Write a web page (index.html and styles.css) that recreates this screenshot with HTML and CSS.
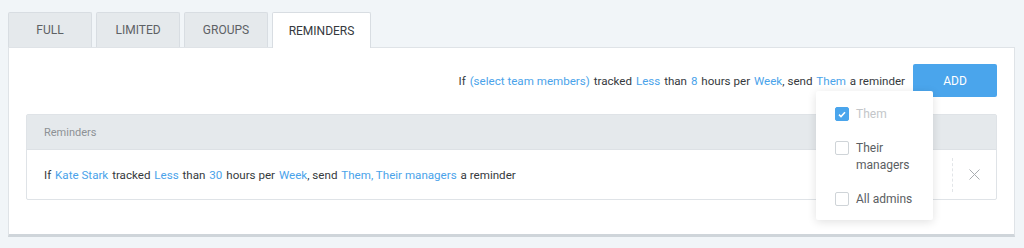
FILE: index.html
```html
<!DOCTYPE html>
<html lang="en">
<head>
    <meta charset="UTF-8">
    <title>Reminders</title>
    <link rel="stylesheet" href="styles.css">
</head>
<body>

<div class="tabs">
    <div class="tab">FULL</div>
    <div class="tab">LIMITED</div>
    <div class="tab">GROUPS</div>
    <div class="tab active">REMINDERS</div>
</div>

<div class="panel">
    <div class="new-rule">
        <div class="sentence">
            If <span class="pick">(select team members)</span> tracked <span class="pick">Less</span> than <span class="pick">8</span> hours per <span class="pick tight">Week</span>, send <span class="pick">Them</span> a reminder
        </div>
        <button class="add-button">ADD</button>

        <div class="dropdown">
            <label class="option disabled">
                <span class="box checked">
                    <svg width="8" height="7" viewBox="0 0 8 7"><path d="M1 3.6 L3 5.5 L7 1.3" fill="none" stroke="#fff" stroke-width="1.6"/></svg>
                </span>
                <span>Them</span>
            </label>
            <label class="option">
                <span class="box"></span>
                <span>Their<br>managers</span>
            </label>
            <label class="option">
                <span class="box"></span>
                <span>All admins</span>
            </label>
        </div>
    </div>

    <div class="table">
        <div class="table-head">Reminders</div>
        <div class="table-row">
            <div class="sentence">
                If <span class="pick">Kate Stark</span> tracked <span class="pick">Less</span> than <span class="pick">30</span> hours per <span class="pick tight">Week</span>, send <span class="pick">Them, Their managers</span> a reminder
            </div>
            <div class="remove">
                <svg width="11" height="11" viewBox="0 0 11 11"><path d="M0.5 0.5 L10.5 10.5 M10.5 0.5 L0.5 10.5" stroke="#a9adb1" stroke-width="1"/></svg>
            </div>
        </div>
    </div>
</div>

</body>
</html>
```

FILE: styles.css
```css
body {
    font-family: Roboto, "Noto Sans", sans-serif;
    background-color: #f1f5f8;
    margin: 0;
    padding: 12px 9px 0 8px;
    color: #35393d;
}

/* Tabs */
.tabs {
    display: flex;
    gap: 4px;
}
.tab {
    width: 82px;
    height: 34px;
    display: flex;
    align-items: center;
    justify-content: center;
    font-size: 12px;
    color: #5d6165;
    background-color: #e5e9ec;
    border: 1px solid #d8dde2;
    border-bottom: none;
    border-radius: 2px 2px 0 0;
}
.tab.active {
    width: 97px;
    height: 35px;
    margin-bottom: -1px;
    background-color: #fff;
    color: #35393d;
    position: relative;
}

/* Panel */
.panel {
    background-color: #fff;
    border: 1px solid #dfe3e7;
    border-bottom: 3px solid #cfd5da;
    padding: 16px 17px 34px 17px;
}
.new-rule {
    display: flex;
    justify-content: flex-end;
    align-items: center;
    gap: 8px;
    position: relative;
}
.sentence {
    font-size: 11.6px;
    white-space: nowrap;
}
.pick {
    color: #4aa3ea;
    margin: 0 1px;
}
.pick.tight {
    margin-right: 0;
}
.add-button {
    width: 84px;
    height: 33px;
    background-color: #4aa5ec;
    color: #fff;
    border: none;
    border-radius: 2px;
    font-family: inherit;
    font-size: 12px;
}

/* Recipients dropdown */
.dropdown {
    position: absolute;
    top: 27px;
    right: 64px;
    width: 117px;
    padding: 15px 0 12px 19px;
    box-sizing: border-box;
    background-color: #fff;
    border-radius: 2px;
    box-shadow: 0 2px 10px rgba(0, 0, 0, 0.12);
    z-index: 2;
    display: flex;
    flex-direction: column;
    gap: 17px;
}
.option {
    display: flex;
    align-items: flex-start;
    gap: 7px;
    font-size: 12px;
    line-height: 17px;
    color: #5a5e62;
}
.option.disabled {
    color: #c3c6c9;
}
.box {
    width: 12px;
    height: 12px;
    margin-top: 1px;
    border: 1px solid #cfd4d8;
    border-radius: 2px;
    display: flex;
    align-items: center;
    justify-content: center;
    flex-shrink: 0;
}
.box.checked {
    background-color: #4aa5ec;
    border-color: #4aa5ec;
}

/* Reminders list */
.table {
    margin-top: 17px;
    border: 1px solid #dfe3e7;
    border-radius: 2px;
}
.table-head {
    height: 34px;
    display: flex;
    align-items: center;
    padding-left: 17px;
    background-color: #e5e9ec;
    border-bottom: 1px solid #dde1e5;
    font-size: 11px;
    color: #8d9195;
}
.table-row {
    height: 49px;
    display: flex;
    align-items: center;
    padding-left: 17px;
}
.table-row .sentence {
    flex: 1;
}
.remove {
    width: 43px;
    height: 34px;
    display: flex;
    align-items: center;
    justify-content: center;
    border-left: 1px dashed #e2e5e8;
}
```
